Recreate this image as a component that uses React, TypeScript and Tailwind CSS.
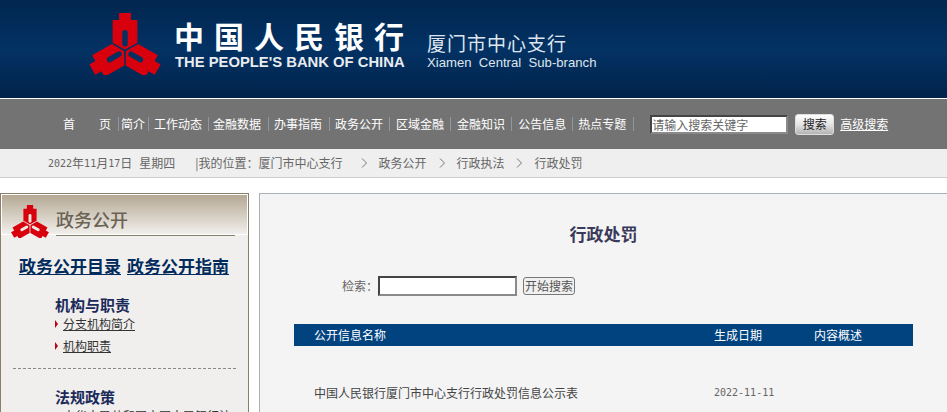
const cjk = "font-['Noto_Sans_CJK_SC','Liberation_Sans',sans-serif]";
const digits = "font-['DejaVu_Sans_Mono','Noto_Sans_CJK_SC',monospace] text-[10px]";

const navItems = [
  { label: "首　　页", gap: "mr-[7px]", after: "mr-[2px]" },
  { label: "简介", gap: "mr-[3px]", after: "mr-[5px]" },
  { label: "工作动态", gap: "mr-[6px]", after: "mr-[4px]" },
  { label: "金融数据", gap: "mr-[7px]", after: "mr-[5px]" },
  { label: "办事指南", gap: "mr-[7px]", after: "mr-[5px]" },
  { label: "政务公开", gap: "mr-[6px]", after: "mr-[6px]" },
  { label: "区域金融", gap: "mr-[6px]", after: "mr-[6px]" },
  { label: "金融知识", gap: "mr-[6px]", after: "mr-[6px]" },
  { label: "公告信息", gap: "mr-[6px]", after: "mr-[5px]" },
  { label: "热点专题", gap: "mr-[7px]", after: "" },
];

const Logo = ({ className, slot }: { className: string; slot: string }) => (
  <svg viewBox="-36 -38 72 62.5" className={className}>
    {[0, 120, 240].map((deg) => (
      <g key={deg} transform={`rotate(${deg})`}>
        <polygon
          points="-6,-38 6,-38 6,-31 12.5,-31 12.5,-8 0.7,-1.4 -0.7,-1.4 -12.5,-8 -12.5,-31 -6,-31"
          fill="#d9000d"
        />
        <line x1="0" y1="-18" x2="0" y2="-7" stroke={slot} strokeWidth="5.5" strokeLinecap="round" />
      </g>
    ))}
  </svg>
);

const Arrow = () => (
  <span className="mr-[5px] h-0 w-0 border-y-[4px] border-l-[3px] border-y-transparent border-l-[#c00010]" />
);

const Chevron = ({ className }: { className: string }) => (
  <svg viewBox="0 0 7 10" className={`h-[10px] w-[7px] ${className}`}>
    <path d="M1 0.5 L5.5 5 L1 9.5" fill="none" stroke="#777" strokeWidth="1" />
  </svg>
);

const SubLink = ({ text, className }: { text: string; className: string }) => (
  <div className={`flex items-center pl-[54px] ${className}`}>
    <Arrow />
    <a className="text-[12px] leading-[14px] text-[#333] underline">{text}</a>
  </div>
);

export default function App() {
  return (
    <div className={`h-[412px] w-[947px] overflow-hidden bg-white ${cjk}`}>
      {/* banner */}
      <div className="flex h-[98px] bg-gradient-to-b from-[#01264f] via-[#033264] to-[#02234b] pl-[89px] pt-[13px]">
        <Logo className="h-[62px] w-[72px]" slot="#06305f" />
        <div className="ml-[13px] flex w-[240px] flex-col pt-[6px]">
          <div className="whitespace-nowrap text-[30px] font-bold leading-[32px] tracking-[10px] text-white">
            中国人民银行
          </div>
          <div className="ml-[1px] mt-[3px] whitespace-nowrap font-['Liberation_Sans'] text-[14.8px] font-bold leading-[16px] text-[#e8ecf0]">
            THE PEOPLE'S BANK OF CHINA
          </div>
        </div>
        <div className="ml-[13px] flex flex-col pt-[18px] text-[#dfe6ee]">
          <div className="whitespace-nowrap text-[19px] leading-[24px] tracking-[1px]">厦门市中心支行</div>
          <div className="whitespace-pre font-['Liberation_Sans'] text-[13.15px] leading-[16px]">
            Xiamen  Central  Sub-branch
          </div>
        </div>
      </div>

      {/* nav */}
      <div className="flex h-[51px] items-center border-t border-white bg-[#737373] pl-[63px]">
        {navItems.map((item) => (
          <div key={item.label} className="flex items-center whitespace-pre text-[12px] text-white">
            <span className={item.gap}>{item.label}</span>
            <span className={`h-[14px] w-px bg-[#8f98a3] ${item.after}`} />
          </div>
        ))}
        <input
          placeholder="请输入搜索关键字"
          className="ml-[16px] h-[19px] w-[138px] border-2 border-t-[#444] border-r-[#8a8a8a] border-b-[#8a8a8a] border-l-[#444] bg-white text-[12px] placeholder:text-[#666]"
        />
        <button className="ml-[7px] h-[21px] w-[39px] rounded-[3px] border border-[#ddd] bg-gradient-to-b from-white via-[#e4e4e4] to-[#b4b4b4] text-[12px] text-[#222]">
          搜索
        </button>
        <a className="ml-[6px] text-[12px] text-white underline">高级搜索</a>
      </div>

      {/* breadcrumb */}
      <div className="flex h-[29px] items-center whitespace-pre border-b border-[#cccccc] bg-[#efefef] pl-[48px] text-[12px] text-[#666]">
        <span className={digits}>2022</span>年<span className={digits}>11</span>月<span className={digits}>17</span>日
        <span className="ml-[7px]">星期四</span>
        <span className="ml-[20px]">|我的位置：厦门市中心支行</span>
        <Chevron className="ml-[18px]" />
        <span className="ml-[11px]">政务公开</span>
        <Chevron className="ml-[12px]" />
        <span className="ml-[11px]">行政执法</span>
        <Chevron className="ml-[11px]" />
        <span className="ml-[12px]">行政处罚</span>
      </div>

      <div className="mt-[15px] flex gap-[10px]">
        {/* left column */}
        <div className="h-[240px] w-[249px] border border-[#8b7f6b] bg-[#f1efed]">
          <div className="flex h-[41px] border border-white bg-gradient-to-b from-[#b5a994] to-[#f1efec] pl-[9px]">
            <Logo className="mt-[10px] h-[33px] w-[38px]" slot="#efe9e2" />
            <div className="ml-[7px] mt-[11px] h-[30px] w-[179px] border-b border-[#85806c] text-[18px] font-medium leading-[26px] text-[#6b6253]">
              政务公开
            </div>
          </div>
          <div className="mt-[20px] flex gap-[6px] whitespace-nowrap pl-[18px] text-[17px] font-bold leading-[22px] text-[#002b5c] underline">
            <a>政务公开目录</a>
            <a>政务公开指南</a>
          </div>
          <div className="mt-[18px] pl-[54px] text-[15px] font-bold leading-[20px] text-[#1a2a5a]">机构与职责</div>
          <SubLink text="分支机构简介" className="mt-[2px]" />
          <SubLink text="机构职责" className="mt-[8px]" />
          <div className="mx-[12px] mt-[15px] border-t border-dashed border-[#888]" />
          <div className="mt-[18px] pl-[54px] text-[15px] font-bold leading-[20px] text-[#1a2a5a]">法规政策</div>
          <SubLink text="中华人民共和国中国人民银行法" className="mt-[2px]" />
        </div>

        {/* right column */}
        <div className="h-[240px] flex-1 border-l border-t border-[#aab0b8] bg-[#f4f4f4] pl-[34px]">
          <div className="mt-[29px] w-[619px] text-center text-[17px] font-bold leading-[22px] text-[#3a3a5a]">
            行政处罚
          </div>
          <div className="mt-[30px] flex h-[22px] items-center pl-[48px] text-[12px] text-[#666]">
            <span>检索：</span>
            <input className="h-[20px] w-[139px] border-2 border-t-[#444] border-r-[#8a8a8a] border-b-[#8a8a8a] border-l-[#444] bg-white" />
            <button className="ml-[6px] h-[18px] w-[52px] rounded-[3px] border border-[#777] bg-[#f0f0f0] text-[12px] leading-[14px] text-[#555]">
              开始搜索
            </button>
          </div>
          <div className="mt-[27px] flex h-[22px] w-[619px] items-center bg-[#00437f] pl-[20px] text-[12px] text-white">
            <span className="w-[400px]">公开信息名称</span>
            <span className="w-[100px]">生成日期</span>
            <span>内容概述</span>
          </div>
          <div className="mt-[36px] flex w-[619px] items-center pl-[20px] text-[12px] leading-[22px]">
            <span className="w-[400px] text-[#444]">中国人民银行厦门市中心支行行政处罚信息公示表</span>
            <span className={`${digits} text-[#666]`}>2022-11-11</span>
          </div>
        </div>
      </div>
    </div>
  );
}
